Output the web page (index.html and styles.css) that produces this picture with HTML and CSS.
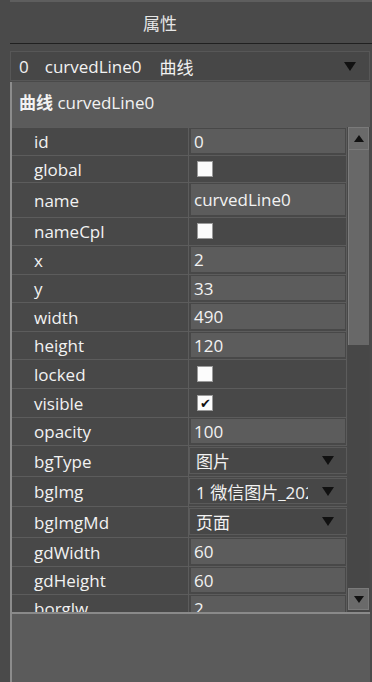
FILE: index.html
```html
<!DOCTYPE html>
<html>
	<head>
		<meta charset="utf-8">
		<title>属性</title>
		<link rel="stylesheet" href="styles.css">
	</head>
	<body>
		<div class="titulo">属性</div>

		<div class="caja">
			<div class="selector">
				<span class="sel_id">0</span>
				<span class="sel_nombre">curvedLine0</span>
				<span>曲线</span>
				<i class="flecha"></i>
			</div>

			<div class="panel">
				<div class="cabecera"><b>曲线</b> curvedLine0</div>

				<div class="tabla_zona">
					<div class="tabla">
						<div class="fila h28"><div class="nombre">id</div><div class="valor"><div class="texto">0</div></div></div>
						<div class="fila h27"><div class="nombre">global</div><div class="valor"><span class="check"></span></div></div>
						<div class="fila h35"><div class="nombre">name</div><div class="valor"><div class="texto">curvedLine0</div></div></div>
						<div class="fila h28"><div class="nombre">nameCpl</div><div class="valor"><span class="check"></span></div></div>
						<div class="fila h29"><div class="nombre">x</div><div class="valor"><div class="texto">2</div></div></div>
						<div class="fila h28"><div class="nombre">y</div><div class="valor"><div class="texto">33</div></div></div>
						<div class="fila h29"><div class="nombre">width</div><div class="valor"><div class="texto">490</div></div></div>
						<div class="fila h28"><div class="nombre">height</div><div class="valor"><div class="texto">120</div></div></div>
						<div class="fila h29"><div class="nombre">locked</div><div class="valor"><span class="check"></span></div></div>
						<div class="fila h29"><div class="nombre">visible</div><div class="valor"><span class="check marcado">&#10004;</span></div></div>
						<div class="fila h28"><div class="nombre">opacity</div><div class="valor"><div class="texto">100</div></div></div>
						<div class="fila h31"><div class="nombre">bgType</div><div class="valor lista"><span class="lista_txt">图片</span><i class="flecha"></i></div></div>
						<div class="fila h30"><div class="nombre">bgImg</div><div class="valor lista"><span class="lista_txt">1 微信图片_20200616</span><i class="flecha"></i></div></div>
						<div class="fila h31"><div class="nombre">bgImgMd</div><div class="valor lista"><span class="lista_txt">页面</span><i class="flecha"></i></div></div>
						<div class="fila h29"><div class="nombre">gdWidth</div><div class="valor"><div class="texto">60</div></div></div>
						<div class="fila h28"><div class="nombre">gdHeight</div><div class="valor"><div class="texto">60</div></div></div>
						<div class="fila h28"><div class="nombre">borglw</div><div class="valor"><div class="texto">2</div></div></div>
					</div>

					<div class="scroll">
						<div class="scroll_btn"><i class="arriba"></i></div>
						<div class="scroll_barra"></div>
						<div class="scroll_pista"></div>
						<div class="scroll_btn abajo_btn"><i class="abajo"></i></div>
					</div>
				</div>

				<div class="pie"></div>
			</div>
		</div>
	</body>
</html>
```

FILE: styles.css
```css
	body
	{
		margin: 0;
		height: 682px;
		overflow: hidden;
		background-color: #4a4a4a;
		color: #f2f2f2;
		font-family: "Open Sans", "Noto Sans CJK SC", sans-serif;
		font-size: 17px;
	}

	.titulo
	{
		height: 41px;
		margin-left: 10px;
		padding-right: 62px;
		border-top: 2px solid #5e5e5e;
		border-bottom: 1px solid #202020;
		line-height: 44px;
		text-align: center;
		color: #e6e6e6;
	}

	.caja
	{
		margin-left: 10px;
		width: 360px;
	}

	.selector
	{
		display: flex;
		align-items: center;
		height: 28px;
		margin-top: 7px;
		padding-left: 8px;
		border: 1px solid #575757;
		background-color: #474747;
		position: relative;
	}

	.sel_id
	{
		margin-right: 16px;
	}

	.sel_nombre
	{
		margin-right: 18px;
	}

	.selector .flecha
	{
		position: absolute;
		right: 13px;
		top: 10px;
	}

	.flecha
	{
		flex: none;
		width: 0;
		height: 0;
		border-left: 6px solid transparent;
		border-right: 6px solid transparent;
		border-top: 9px solid #111;
	}

	.panel
	{
		margin-top: 1px;
		height: 600px;
		background-color: #5b5b5b;
		border-left: 2px solid #8c8c8c;
		display: flex;
		flex-direction: column;
	}

	.cabecera
	{
		height: 45px;
		line-height: 42px;
		padding-left: 7px;
	}

	.tabla_zona
	{
		display: flex;
		height: 485px;
		overflow: hidden;
		background-color: #484848;
	}

	.tabla
	{
		width: 335px;
		flex: none;
	}

	.fila
	{
		display: flex;
		box-sizing: border-box;
		border-top: 1px solid #5c5c5c;
	}

	.h27 { height: 27px; }
	.h28 { height: 28px; }
	.h29 { height: 29px; }
	.h30 { height: 30px; }
	.h31 { height: 31px; }
	.h35 { height: 35px; }

	.nombre
	{
		width: 177px;
		flex: none;
		padding-left: 22px;
		box-sizing: border-box;
		display: flex;
		align-items: center;
		border-right: 1px solid #5c5c5c;
	}

	.valor
	{
		flex: 1;
		min-width: 0;
		display: flex;
		align-items: center;
		padding: 1px 1px 2px 2px;
		border-right: 1px solid #5c5c5c;
	}

	.texto
	{
		align-self: stretch;
		flex: 1;
		display: flex;
		align-items: center;
		padding-left: 3px;
		background-color: #5c5c5c;
	}

	.check
	{
		width: 14px;
		height: 14px;
		margin-left: 6px;
		border: 1px solid #9a9a9a;
		background-color: #fcfcfc;
		color: #111;
		font-size: 13px;
		line-height: 15px;
		text-align: center;
	}

	.lista
	{
		margin: 1px 0 2px 0;
		padding: 0 13px 0 6px;
		border: 1px solid #5a5a5a;
		background-color: #474747;
	}

	.lista_txt
	{
		flex: none;
		width: 112px;
		margin-right: 14px;
		white-space: nowrap;
		overflow: hidden;
	}

	.scroll
	{
		width: 21px;
		margin-left: 1px;
		display: flex;
		flex-direction: column;
		background-color: #474747;
	}

	.scroll_btn
	{
		height: 23px;
		display: flex;
		align-items: center;
		justify-content: center;
		background-color: #6a6a6a;
		border: 1px solid #7a7a7a;
		box-sizing: border-box;
	}

	.abajo_btn
	{
		height: 22px;
		margin-bottom: 2px;
	}

	.scroll_barra
	{
		height: 195px;
		box-sizing: border-box;
		background-color: #686868;
		border-left: 1px solid #7c7c7c;
	}

	.scroll_pista
	{
		flex: 1;
	}

	.arriba
	{
		border-left: 5px solid transparent;
		border-right: 5px solid transparent;
		border-bottom: 7px solid #111;
	}

	.abajo
	{
		border-left: 5px solid transparent;
		border-right: 5px solid transparent;
		border-top: 7px solid #111;
	}

	.pie
	{
		flex: 1;
		border-top: 2px solid #8a8a8a;
		background-color: #5b5b5b;
	}
```
